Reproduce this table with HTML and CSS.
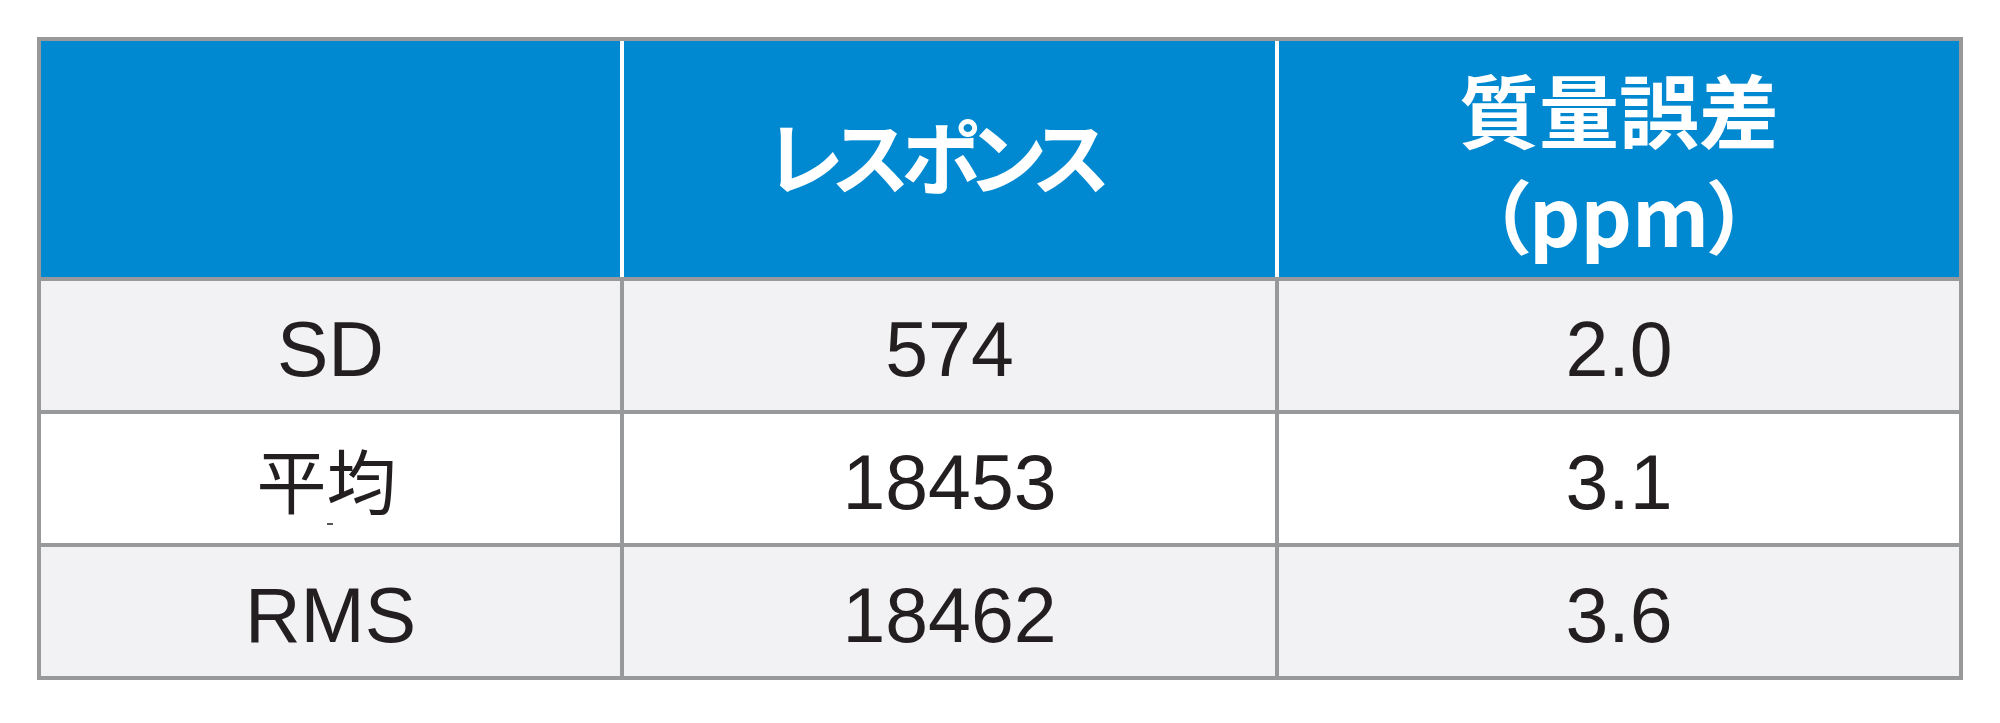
FILE: index.html
```html
<!DOCTYPE html>
<html lang="ja">
<head>
<meta charset="utf-8">
<title>レスポンス・質量誤差</title>
<link rel="stylesheet" href="styles.css">
</head>
<body>
<div class="tbl">
  <div class="row head">
    <div class="cell"></div>
    <div class="cell single">レスポンス</div>
    <div class="cell double"><span>質量誤差</span><span>（ppm）</span></div>
  </div>
  <div class="row shade">
    <div class="cell num">SD</div>
    <div class="cell num">574</div>
    <div class="cell num">2.0</div>
  </div>
  <div class="row plain">
    <div class="cell cjk">平均<span class="speck"></span></div>
    <div class="cell num">18453</div>
    <div class="cell num">3.1</div>
  </div>
  <div class="row shade">
    <div class="cell num">RMS</div>
    <div class="cell num">18462</div>
    <div class="cell num">3.6</div>
  </div>
</div>
</body>
</html>
```
FILE: styles.css
```css
html, body {
  margin: 0;
  padding: 0;
  background: #ffffff;
}

body {
  padding: 37px 0 0 37px;
}

.tbl {
  width: 1918px;
  display: flex;
  flex-direction: column;
  gap: 4px;
  background: #98999b;
  border: 4px solid #98999b;
}

.row {
  display: grid;
  grid-template-columns: 579px 651px 680px;
  column-gap: 4px;
  height: 129px;
}

.head {
  height: 236px;
  background: #ffffff;
}

.cell {
  display: flex;
  align-items: center;
  justify-content: center;
  position: relative;
}

.head .cell {
  background: #0089d0;
  color: #ffffff;
  font-family: "Noto Sans CJK JP", "Noto Sans", sans-serif;
  font-weight: 700;
  font-size: 80px;
  font-feature-settings: "palt";
  line-height: 1;
}

.head .single {
  padding: 0 30px 12px 0;
  box-sizing: border-box;
  letter-spacing: -8px;
}

.head .double {
  flex-direction: column;
  gap: 25px;
}

.head .double span {
  display: block;
}

.shade .cell {
  background: #f2f2f4;
}

.plain .cell {
  background: #ffffff;
}

.num {
  font-family: "Liberation Sans", Arial, sans-serif;
  font-size: 77px;
  color: #231f20;
  padding-top: 7px;
  box-sizing: border-box;
}

.cjk {
  font-family: "Noto Sans CJK JP", sans-serif;
  font-weight: 400;
  font-size: 70px;
  color: #231f20;
  padding-right: 8px;
  box-sizing: border-box;
}

.speck {
  position: absolute;
  left: 286px;
  top: 109px;
  width: 6px;
  height: 2px;
  background: #555555;
}
```
